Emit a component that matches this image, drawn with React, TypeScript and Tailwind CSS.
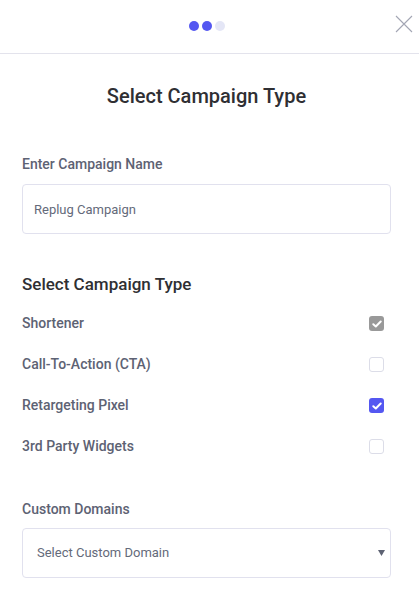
import { useState } from "react";

type Option = { id: string; label: string; checked: boolean; locked?: boolean };

const OPTIONS: Option[] = [
  { id: "shortener", label: "Shortener", checked: true, locked: true },
  { id: "cta", label: "Call-To-Action (CTA)", checked: false },
  { id: "retargeting", label: "Retargeting Pixel", checked: true },
  { id: "widgets", label: "3rd Party Widgets", checked: false },
];

function Checkbox({ checked, locked }: { checked: boolean; locked?: boolean }) {
  if (!checked) {
    return <span className="block w-[15px] h-[15px] rounded-[3px] border border-[#dcdde8] bg-white" />;
  }
  return (
    <span
      className={`flex items-center justify-center w-[15px] h-[15px] rounded-[3px] ${
        locked ? "bg-[#999999]" : "bg-[#5457f1]"
      }`}
    >
      <svg width="10" height="8" viewBox="0 0 10 8" fill="none">
        <path d="M1.3 4.2 3.8 6.5 8.7 1.5" stroke="white" strokeWidth="2" strokeLinecap="round" strokeLinejoin="round" />
      </svg>
    </span>
  );
}

export default function App() {
  const [name, setName] = useState("Replug Campaign");
  const [options, setOptions] = useState(OPTIONS);

  const toggle = (id: string) =>
    setOptions((prev) => prev.map((o) => (o.id === id && !o.locked ? { ...o, checked: !o.checked } : o)));

  return (
    <div className="w-[419px] h-[600px] bg-white overflow-hidden font-['Roboto',sans-serif]">
      {/* header */}
      <div className="relative h-[54px] border-b border-[#e3e3ec] flex items-center justify-center pr-[5px]">
        <div className="flex gap-[3px] mt-[-1px]">
          <span className="w-[10px] h-[10px] rounded-full bg-[#5457f1]" />
          <span className="w-[10px] h-[10px] rounded-full bg-[#5457f1]" />
          <span className="w-[10px] h-[10px] rounded-full bg-[#e4e6f6]" />
        </div>
        <button className="absolute right-[6px] top-[15px] p-0">
          <svg width="18" height="18" viewBox="0 0 18 18" fill="none">
            <path d="M1 1 17 17M17 1 1 17" stroke="#a3a6b4" strokeWidth="1.1" />
          </svg>
        </button>
      </div>

      <div className="pl-[22px] pr-[28px]">
        <h2 className="pt-[28px] text-center text-[20px] leading-7 font-medium text-[#2f2f33]">
          Select Campaign Type
        </h2>

        <label className="block mt-[44px] text-[14px] leading-5 font-medium text-[#5d6273]">
          Enter Campaign Name
        </label>
        <input
          value={name}
          onChange={(e) => setName(e.target.value)}
          className="mt-[10px] w-full h-[50px] px-[11px] rounded-[4px] border border-[#e1e1ee] text-[13px] text-[#646a7a] outline-none"
        />

        <h3 className="mt-[38px] text-[17px] leading-6 font-medium text-[#2f2f33]">Select Campaign Type</h3>
        <div className="mt-[7px]">
          {options.map((o) => (
            <div
              key={o.id}
              onClick={() => toggle(o.id)}
              className="h-[41px] flex items-center justify-between pr-[7px] cursor-pointer"
            >
              <span className="text-[14px] font-medium text-[#5d6273]">{o.label}</span>
              <Checkbox checked={o.checked} locked={o.locked} />
            </div>
          ))}
        </div>

        <label className="block mt-[32px] text-[14px] leading-5 font-medium text-[#5d6273]">Custom Domains</label>
        <div className="relative mt-[9px] h-[50px] rounded-[4px] border border-[#e1e1ee] flex items-center pl-[14px]">
          <span className="text-[13px] text-[#646a7a]">Select Custom Domain</span>
          <svg className="absolute right-[5px] top-[21px]" width="7" height="6" viewBox="0 0 7 6">
            <path d="M0 0H7L3.5 6Z" fill="#5d6273" />
          </svg>
        </div>
      </div>
    </div>
  );
}
